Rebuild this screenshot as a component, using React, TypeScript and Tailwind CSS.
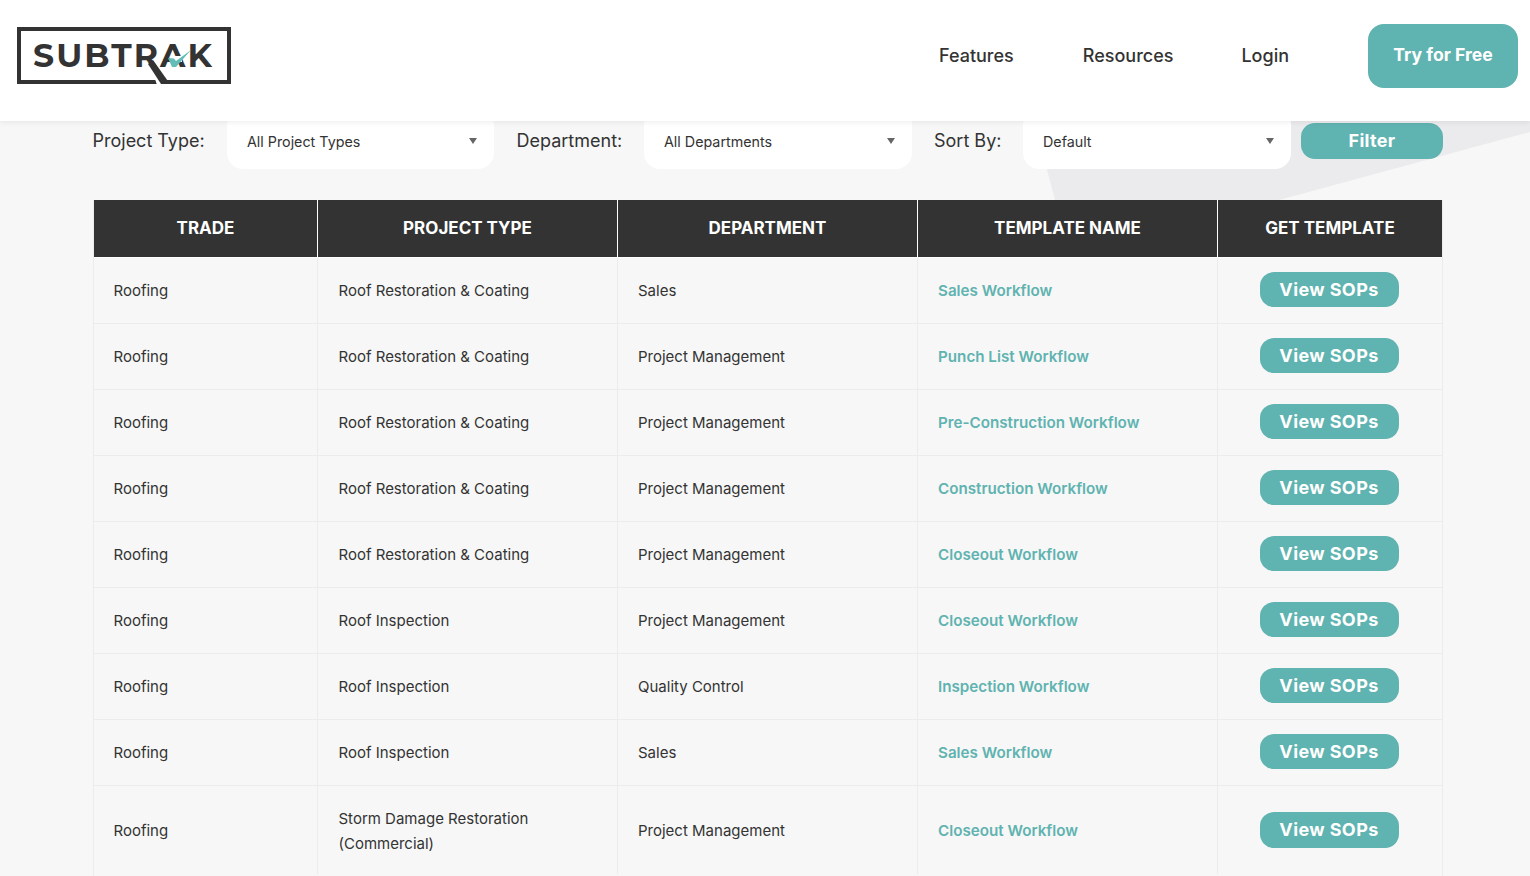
import React from "react";

const rows: [string, string, string, string, boolean?][] = [
  ["Roofing", "Roof Restoration & Coating", "Sales", "Sales Workflow"],
  ["Roofing", "Roof Restoration & Coating", "Project Management", "Punch List Workflow"],
  ["Roofing", "Roof Restoration & Coating", "Project Management", "Pre-Construction Workflow"],
  ["Roofing", "Roof Restoration & Coating", "Project Management", "Construction Workflow"],
  ["Roofing", "Roof Restoration & Coating", "Project Management", "Closeout Workflow"],
  ["Roofing", "Roof Inspection", "Project Management", "Closeout Workflow"],
  ["Roofing", "Roof Inspection", "Quality Control", "Inspection Workflow"],
  ["Roofing", "Roof Inspection", "Sales", "Sales Workflow"],
  ["Roofing", "Storm Damage Restoration (Commercial)", "Project Management", "Closeout Workflow", true],
];

const headers = ["TRADE", "PROJECT TYPE", "DEPARTMENT", "TEMPLATE NAME", "GET TEMPLATE"];
const grid = "grid grid-cols-[224px_300px_300px_300px_224px]";

function Logo() {
  return (
    <div className="relative w-[214px] h-[57px] border-[4px] border-[#333333]">
      <span className="absolute left-[12px] top-[2px] text-[33px] leading-[44px] font-bold tracking-[2.1px] text-[#333333] font-['Montserrat','Open_Sans',sans-serif]">
        SUBTRAK
      </span>
      <svg className="absolute left-[-4px] top-[-4px]" width="214" height="60" viewBox="17 27 214 60">
        <rect x="170" y="56" width="12" height="6" fill="#ffffff" />
        <polygon points="155,79 160,79 165,85 157,85" fill="#ffffff" />
        <polygon points="148,64 153,60 170,84 161,84" fill="#333333" />
        <polygon points="168,58 174,58.5 176,61 191,50 176,67 172,67" fill="#62bdb8" />
      </svg>
    </div>
  );
}

function Select({ label, w }: { label: string; w: string }) {
  return (
    <div className={`${w} shrink-0 h-[60px] bg-white rounded-[16px] pl-[20px] pr-[17px] flex items-center justify-between text-[14.3px] text-[#333333]`}>
      <span className="mt-[5px]">{label}</span>
      <span className="mt-[4px] w-0 h-0 border-x-[4px] border-x-transparent border-t-[6px] border-t-[#666666]" />
    </div>
  );
}

export default function App() {
  return (
    <div className="relative h-[876px] overflow-hidden bg-[#f7f7f7] font-['Inter',sans-serif] text-[#333333]">
      <svg className="absolute left-0 top-0 pointer-events-none" width="1530" height="300" viewBox="0 0 1530 300">
        <polygon points="1034,121 1530,121 1530,132 1279,200 1055,200" fill="#ebebed" />
      </svg>

      <header className="relative z-10 h-[121px] bg-white shadow-[0_1px_6px_rgba(0,0,0,0.08)] flex items-center justify-between pl-[17px] pr-[12px]">
        <div className="mt-[-10px]">
          <Logo />
        </div>
        <nav className="flex items-center mt-[-9px]">
          <a className="mt-[-2px] text-[18px] font-medium text-[#333333]">Features</a>
          <a className="mt-[-2px] ml-[69px] text-[18px] font-medium text-[#333333]">Resources</a>
          <a className="mt-[-2px] ml-[68px] text-[18px] font-medium text-[#333333]">Login</a>
          <a className="ml-[79px] pb-[2px] w-[150px] h-[64px] rounded-[16px] bg-[#5fb3b0] text-white text-[17.6px] font-bold flex items-center justify-center">Try for Free</a>
        </nav>
      </header>

      <div className="relative mt-[-12px] ml-[93px] w-[1350px]">
        <div className="flex items-start h-[91px]">
          <span className="mt-[20px] ml-[-0.5px] w-[134.5px] shrink-0 text-[18px] leading-[24px]">Project Type:</span>
          <Select label="All Project Types" w="w-[267px]" />
          <span className="mt-[20px] ml-[22.5px] w-[127.5px] shrink-0 text-[18px] leading-[24px]">Department:</span>
          <Select label="All Departments" w="w-[268px]" />
          <span className="mt-[20px] ml-[22px] w-[89px] shrink-0 text-[18px] leading-[24px]">Sort By:</span>
          <Select label="Default" w="w-[268px]" />
          <button className="ml-[10px] mt-[14px] pb-[2px] w-[142px] h-[36px] rounded-[14px] bg-[#5fb3b0] text-white text-[18px] tracking-[0.3px] font-bold">Filter</button>
        </div>

        <div className="border-x border-[#ececec]">
          <div className={`${grid} h-[58px] bg-[#333333] border-b border-white`}>
            {headers.map((h, i) => (
              <div key={h} className={`flex items-center justify-center text-white text-[17px] font-bold ${i < 4 ? "border-r border-white" : ""}`}>
                {h}
              </div>
            ))}
          </div>
          {rows.map((r, i) => (
            <div key={i} className={`${grid} ${r[4] ? "h-[92px] pb-[4px]" : "h-[66px] border-b border-[#ececec]"} text-[15px] leading-[25px]`}>
              <div className="flex items-center pl-[19.5px] border-r border-[#ececec]">{r[0]}</div>
              <div className={`flex items-center pl-[20.5px] pr-[60px] border-r border-[#ececec] ${r[4] ? "pt-[2px]" : ""}`}>{r[1]}</div>
              <div className="flex items-center pl-[20px] border-r border-[#ececec]">{r[2]}</div>
              <div className="flex items-center pl-[20px] border-r border-[#ececec] text-[15.2px] font-semibold text-[#5fb3b0]">{r[3]}</div>
              <div className="flex items-center justify-center pr-[2px]">
                <a className={`${r[4] ? "h-[36px]" : "h-[35px] mt-[-2px]"} w-[139px] pb-[1px] rounded-[14px] bg-[#5fb3b0] text-white text-[18px] tracking-[0.4px] font-bold flex items-center justify-center`}>View SOPs</a>
              </div>
            </div>
          ))}
        </div>
      </div>
    </div>
  );
}
